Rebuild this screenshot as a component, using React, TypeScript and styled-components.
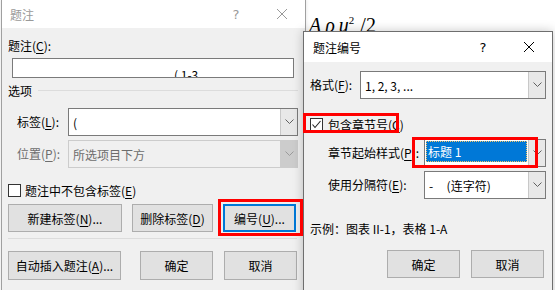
import React from "react"
import styled, { createGlobalStyle } from "styled-components"

const GlobalStyle = createGlobalStyle`
    html, body {
        margin: 0;
        padding: 0;
    }
    body {
        width: 555px;
        height: 290px;
        overflow: hidden;
        background: #fff;
        font-family: "Noto Sans CJK SC", "Noto Sans", sans-serif;
        font-size: 12px;
        color: #000;
    }
`

const SCxDesktop = styled.div`
    position: relative;
    width: 555px;
    height: 290px;
    overflow: hidden;
    background: #fff;
`

const SCxFormula = styled.div`
    position: absolute;
    left: 309px;
    top: 8px;
    font-family: "Liberation Serif", serif;
    font-size: 20px;
    line-height: 24px;
    color: #000;
    white-space: nowrap;

    i {
        margin-right: 4px;
    }
    sup {
        font-size: 11px;
        vertical-align: 8px;
        margin-left: -4px;
        margin-right: 6px;
    }
`

const SCxDialog = styled.div<{
    $left: number
    $top: number
    $width: number
    $active?: boolean
}>`
    position: absolute;
    left: ${p => p.$left}px;
    top: ${p => p.$top}px;
    width: ${p => p.$width}px;
    height: 320px;
    box-sizing: border-box;
    border: 1px solid ${p => (p.$active ? "#6e6e6e" : "#a0a0a0")};
    background: #f0f0f0;
    display: flex;
    flex-direction: column;
    box-shadow: ${p =>
        p.$active ? "0 0 10px rgba(0, 0, 0, 0.22)" : "0 0 4px rgba(0, 0, 0, 0.12)"};
`

const SCxTitleBar = styled.div<{ $height: number; $active?: boolean; $pad: number }>`
    height: ${p => p.$height}px;
    flex: none;
    background: #fff;
    display: flex;
    align-items: center;
    padding-left: ${p => p.$pad}px;
    color: ${p => (p.$active ? "#000" : "#999")};
`

const SCxTitle = styled.div`
    flex: 1;
    font-size: 12px;
`

const SCxCaptionButton = styled.div<{ $active?: boolean }>`
    width: 46px;
    height: 100%;
    display: flex;
    align-items: center;
    justify-content: center;
    font-family: "DejaVu Sans", sans-serif;
    font-size: 13px;
    color: ${p => (p.$active ? "#000" : "#999")};
`

const SCxBody = styled.div<{ $padLeft: number; $padRight: number }>`
    display: flex;
    flex-direction: column;
    padding: 0 ${p => p.$padRight}px 0 ${p => p.$padLeft}px;
`

const SCxLabel = styled.div<{ $mt?: number; $indent?: number; $disabled?: boolean }>`
    margin-top: ${p => p.$mt || 0}px;
    padding-left: ${p => p.$indent || 0}px;
    height: 16px;
    line-height: 16px;
    white-space: nowrap;
    color: ${p => (p.$disabled ? "#6d6d6d" : "#000")};
`

const SCxKey = styled.span`
    text-decoration: underline;
    text-underline-offset: 2px;
`

const SCxTextBox = styled.div`
    margin: 4px 4px 0 4px;
    height: 20px;
    box-sizing: border-box;
    border: 1px solid #7a7a7a;
    background: #fff;
    overflow: hidden;
    padding: 8px 0 0 161px;
    line-height: 16px;
    white-space: nowrap;
`

const SCxGroupHeader = styled.div`
    margin-top: 4px;
    height: 16px;
    display: flex;
    align-items: center;
    gap: 6px;
`

const SCxGroupLine = styled.div`
    flex: 1;
    height: 1px;
    background: #dcdcdc;
`

const SCxFieldRow = styled.div<{ $mt: number; $labelWidth: number; $indent?: number }>`
    margin-top: ${p => p.$mt}px;
    display: grid;
    grid-template-columns: ${p => p.$labelWidth}px 1fr;
    align-items: center;
    padding-left: ${p => p.$indent || 0}px;
`

const SCxCombo = styled.div<{ $disabled?: boolean }>`
    height: 28px;
    box-sizing: border-box;
    display: flex;
    border: 1px solid ${p => (p.$disabled ? "#cccccc" : "#7a7a7a")};
    background: ${p => (p.$disabled ? "#f0f0f0" : "#fff")};
`

const SCxComboText = styled.div<{ $selected?: boolean; $disabled?: boolean }>`
    flex: 1;
    display: flex;
    align-items: center;
    white-space: pre;
    padding-left: ${p => (p.$selected ? 2 : 4)}px;
    margin: ${p => (p.$selected ? "1px 1px 4px 1px" : "0")};
    background: ${p => (p.$selected ? "#0078d7" : "transparent")};
    color: ${p => (p.$selected ? "#fff" : p.$disabled ? "#6d6d6d" : "#000")};
    outline: ${p => (p.$selected ? "1px dotted #f3c46a" : "none")};
    outline-offset: -1px;
`

const SCxComboArrow = styled.div<{ $disabled?: boolean }>`
    width: 16px;
    flex: none;
    display: flex;
    align-items: center;
    justify-content: center;
    border-left: 1px solid ${p => (p.$disabled ? "#cccccc" : "#c8c8c8")};
    background: ${p => (p.$disabled ? "#cccccc" : "#e8e8e8")};
`

const SCxCheckRow = styled.div<{ $mt: number }>`
    margin-top: ${p => p.$mt}px;
    height: 16px;
    display: flex;
    align-items: center;
    gap: 4px;
    white-space: nowrap;
`

const SCxCheckBox = styled.div`
    width: 13px;
    height: 13px;
    box-sizing: border-box;
    border: 1px solid #333;
    background: #fff;
    display: flex;
    align-items: center;
    justify-content: center;
    flex: none;
`

const SCxCheckText = styled.span<{ $ml?: number }>`
    margin-left: ${p => p.$ml || 0}px;
`

const SCxButtonRow = styled.div<{ $mt: number; $gap?: number; $indent?: number }>`
    margin-top: ${p => p.$mt}px;
    display: flex;
    gap: ${p => p.$gap || 10}px;
    padding-left: ${p => p.$indent || 0}px;
`

const SCxButton = styled.div<{ $width: number; $height?: number; $focused?: boolean; $ml?: number }>`
    width: ${p => p.$width}px;
    height: ${p => p.$height || 28}px;
    margin-left: ${p => p.$ml || 0}px;
    box-sizing: border-box;
    border: ${p => (p.$focused ? "2px solid #0078d7" : "1px solid #adadad")};
    background: #e1e1e1;
    display: flex;
    align-items: center;
    justify-content: center;
    white-space: nowrap;
`

const SCxSeparator = styled.div`
    margin: 6px 1px 0 0;
    height: 1px;
    background: #dcdcdc;
`

const SCxHighlight = styled.div<{ $x: number; $y: number; $w: number; $h: number }>`
    position: absolute;
    left: ${p => p.$x}px;
    top: ${p => p.$y}px;
    width: ${p => p.$w}px;
    height: ${p => p.$h}px;
    box-sizing: border-box;
    border: 3px solid #ff0000;
    pointer-events: none;
`

const Chevron = ({ color = "#606060" }: { color?: string }) => (
    <svg width="9" height="6" viewBox="0 0 9 6">
        <polyline points="0.5,0.5 4.5,4.5 8.5,0.5" fill="none" stroke={color} strokeWidth="1" />
    </svg>
)

const Combo: React.FC<{
    text: string
    disabled?: boolean
    selected?: boolean
}> = ({ text, disabled, selected }) => (
    <SCxCombo $disabled={disabled}>
        <SCxComboText $selected={selected} $disabled={disabled}>
            {text}
        </SCxComboText>
        <SCxComboArrow $disabled={disabled}>
            <Chevron color={disabled ? "#9a9a9a" : "#606060"} />
        </SCxComboArrow>
    </SCxCombo>
)

const TitleBar: React.FC<{ title: string; height: number; pad: number; active?: boolean }> = ({
    title,
    height,
    pad,
    active
}) => (
    <SCxTitleBar $height={height} $pad={pad} $active={active}>
        <SCxTitle>{title}</SCxTitle>
        <SCxCaptionButton $active={active}>?</SCxCaptionButton>
        <SCxCaptionButton $active={active}>
            <svg width="12" height="12" viewBox="0 0 12 12">
                <path
                    d="M1 1 L11 11 M11 1 L1 11"
                    stroke={active ? "#000" : "#999"}
                    strokeWidth="1"
                />
            </svg>
        </SCxCaptionButton>
    </SCxTitleBar>
)

const CaptionDialog = () => (
    <SCxDialog $left={1} $top={-1} $width={305}>
        <TitleBar title="题注" height={28} pad={8} />
        <SCxBody $padLeft={6} $padRight={7}>
            <SCxLabel $mt={10}>
                题注(<SCxKey>C</SCxKey>):
            </SCxLabel>
            <SCxTextBox>( 1-3</SCxTextBox>
            <SCxGroupHeader>
                选项
                <SCxGroupLine />
            </SCxGroupHeader>
            <SCxFieldRow $mt={10} $labelWidth={60}>
                <SCxLabel $indent={9}>
                    标签(<SCxKey>L</SCxKey>):
                </SCxLabel>
                <Combo text="(" />
            </SCxFieldRow>
            <SCxFieldRow $mt={4} $labelWidth={60}>
                <SCxLabel $indent={9} $disabled>
                    位置(<SCxKey>P</SCxKey>):
                </SCxLabel>
                <Combo text="所选项目下方" disabled />
            </SCxFieldRow>
            <SCxCheckRow $mt={14}>
                <SCxCheckBox />
                <SCxCheckText>
                    题注中不包含标签(<SCxKey>E</SCxKey>)
                </SCxCheckText>
            </SCxCheckRow>
            <SCxButtonRow $mt={6}>
                <SCxButton $width={114}>
                    新建标签(<SCxKey>N</SCxKey>)...
                </SCxButton>
                <SCxButton $width={81}>
                    删除标签(<SCxKey>D</SCxKey>)
                </SCxButton>
                <SCxButton $width={73} $focused>
                    编号(<SCxKey>U</SCxKey>)...
                </SCxButton>
            </SCxButtonRow>
            <SCxSeparator />
            <SCxButtonRow $mt={12} $gap={11}>
                <SCxButton $width={113} $height={29}>
                    自动插入题注(<SCxKey>A</SCxKey>)...
                </SCxButton>
                <SCxButton $width={73} $height={29} $ml={8}>
                    确定
                </SCxButton>
                <SCxButton $width={73} $height={29}>
                    取消
                </SCxButton>
            </SCxButtonRow>
        </SCxBody>
    </SCxDialog>
)

const NumberingDialog = () => (
    <SCxDialog $left={303} $top={31} $width={250} $active>
        <TitleBar title="题注编号" height={30} pad={9} active />
        <SCxBody $padLeft={6} $padRight={6}>
            <SCxFieldRow $mt={9} $labelWidth={50}>
                <SCxLabel>
                    格式(<SCxKey>F</SCxKey>):
                </SCxLabel>
                <Combo text="1, 2, 3, ..." />
            </SCxFieldRow>
            <SCxCheckRow $mt={17}>
                <SCxCheckBox>
                    <svg width="11" height="11" viewBox="0 0 11 11">
                        <polyline
                            points="1.5,5.5 4,8.5 9.5,2"
                            fill="none"
                            stroke="#222"
                            strokeWidth="1.1"
                        />
                    </svg>
                </SCxCheckBox>
                <SCxCheckText $ml={1}>
                    包含章节号(<SCxKey>C</SCxKey>)
                </SCxCheckText>
            </SCxCheckRow>
            <SCxFieldRow $mt={7} $labelWidth={96} $indent={18}>
                <SCxLabel>
                    章节起始样式(<SCxKey>P</SCxKey>):
                </SCxLabel>
                <Combo text="标题 1" selected />
            </SCxFieldRow>
            <SCxFieldRow $mt={4} $labelWidth={96} $indent={18}>
                <SCxLabel>
                    使用分隔符(<SCxKey>E</SCxKey>):
                </SCxLabel>
                <Combo text="-     (连字符)" />
            </SCxFieldRow>
            <SCxLabel $mt={22}>示例：图表 II-1，表格 1-A</SCxLabel>
            <SCxButtonRow $mt={13} $gap={11} $indent={77}>
                <SCxButton $width={73}>确定</SCxButton>
                <SCxButton $width={73}>取消</SCxButton>
            </SCxButtonRow>
        </SCxBody>
    </SCxDialog>
)

export default function App() {
    return (
        <>
            <GlobalStyle />
            <SCxDesktop>
                <SCxFormula>
                    <i>A</i>
                    <i>ρ</i>
                    <i>u</i>
                    <sup>2</sup>/2
                </SCxFormula>
                <CaptionDialog />
                <NumberingDialog />
                <SCxHighlight $x={218} $y={199} $w={85} $h={37} />
                <SCxHighlight $x={303} $y={113} $w={96} $h={20} />
                <SCxHighlight $x={412} $y={137} $w={126} $h={31} />
            </SCxDesktop>
        </>
    )
}
